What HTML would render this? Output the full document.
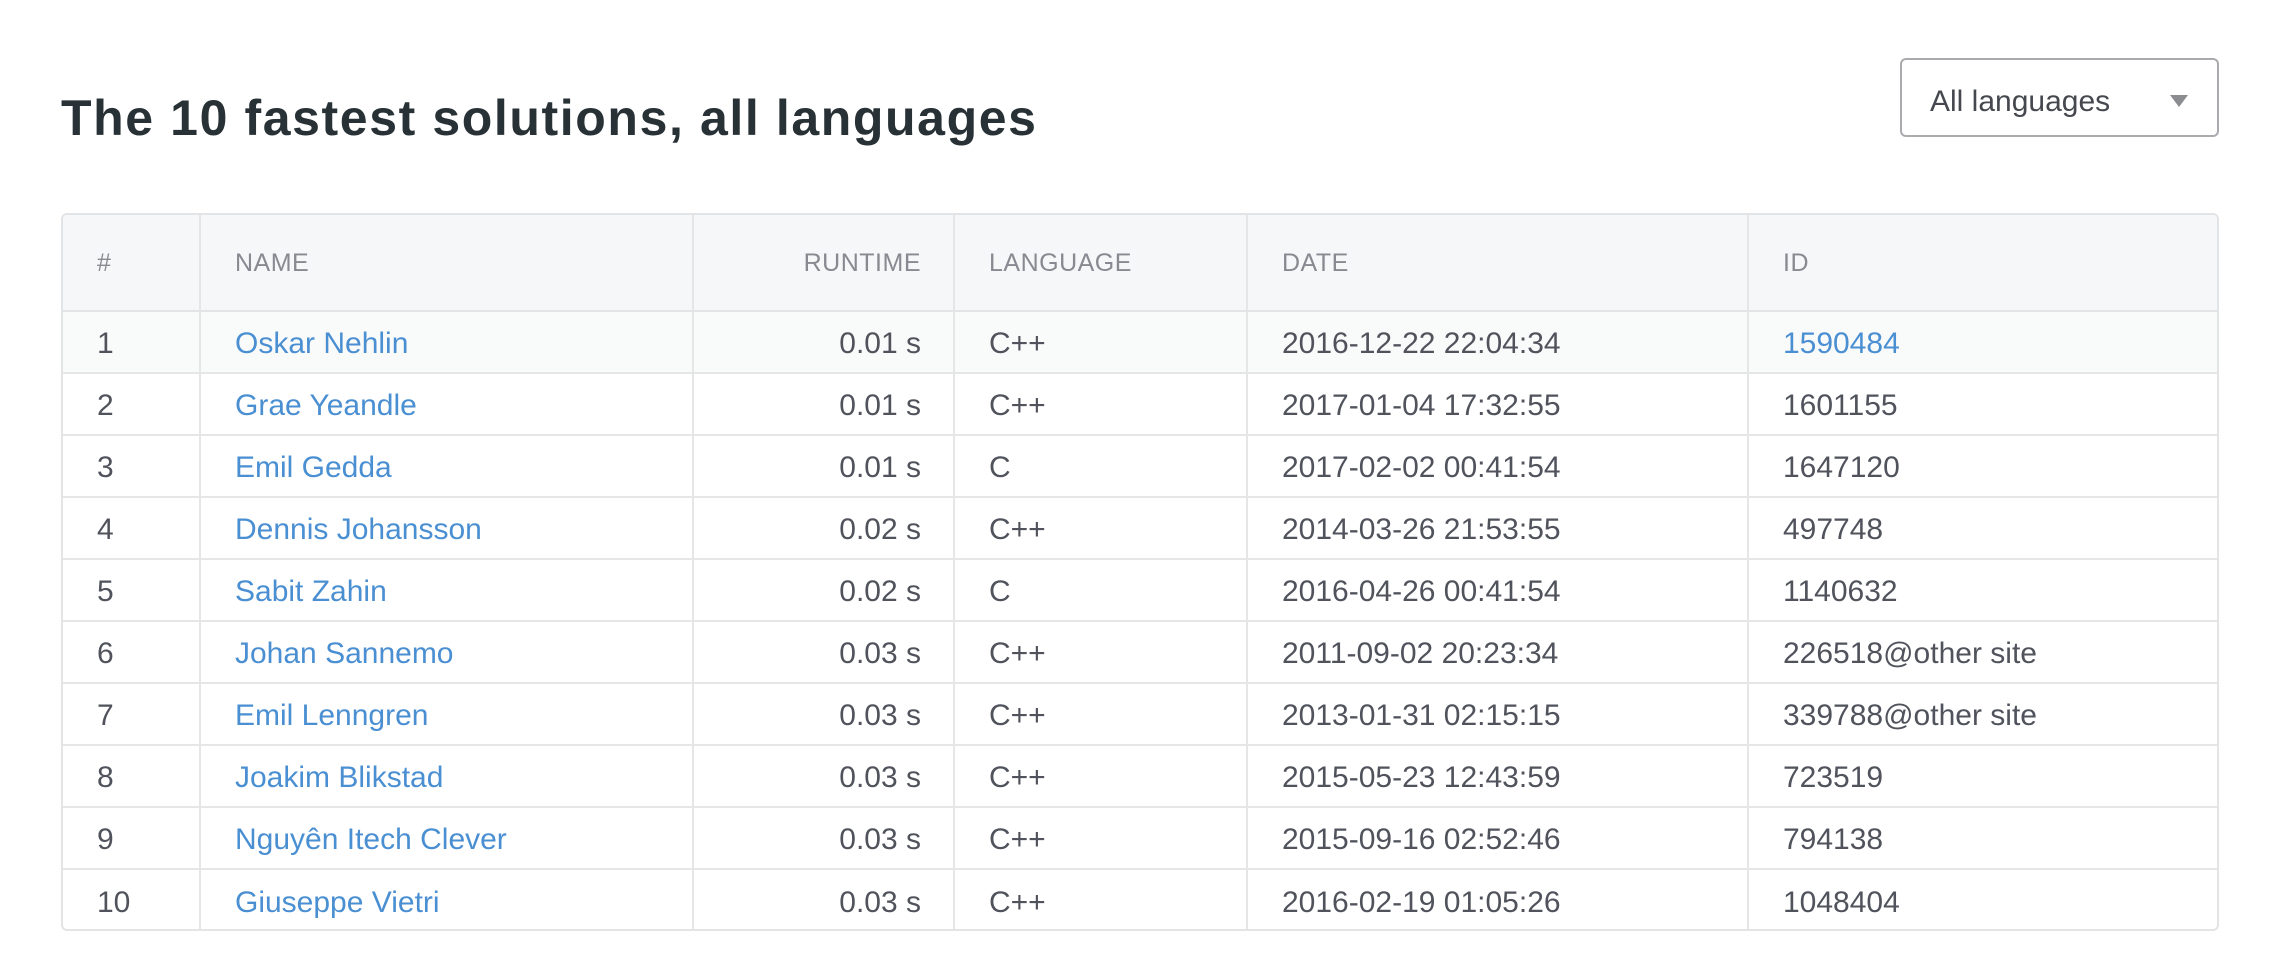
<!DOCTYPE html>
<html><head><meta charset="utf-8"><style>
*{box-sizing:border-box;margin:0;padding:0}
body{width:2276px;height:978px;background:#fff;font-family:"Liberation Sans",sans-serif;position:relative;overflow:hidden}
h1{position:absolute;left:61px;top:88px;font-size:50px;font-weight:bold;color:#283236;line-height:60px;letter-spacing:1.6px}
.sel{position:absolute;left:1900px;top:58px;width:319px;height:79px;border:2px solid #a9abae;border-radius:6px;color:#45484e;font-size:30px;line-height:83px;padding-left:28px}
.sel i{position:absolute;left:268px;top:35px;width:0;height:0;border-left:9px solid transparent;border-right:9px solid transparent;border-top:12px solid #8a8c90}
.tbl{position:absolute;left:61px;top:213px;width:2158px;height:718px;border:2px solid #e3e4e6;border-radius:6px;overflow:hidden}
table{border-collapse:collapse;width:100%;table-layout:fixed}
td,th{border-left:2px solid #e6e6e6;border-top:2px solid #e6e6e6;padding:0 34px;font-size:30px;color:#50535c;text-align:left;white-space:nowrap;font-weight:normal}
td:first-child,th:first-child{border-left:none}
tr:first-child th{border-top:none}
th{height:96px;background:#f6f7f9;color:#878a91;font-size:25px;letter-spacing:0.5px;padding-top:2px}
thead tr th{border-bottom:2px solid #e3e4e6}
td{height:62px;padding-top:4px}
tbody tr:first-child td{border-top:none;background:#f9fafa}
.r{text-align:right;padding-right:32px}
a{color:#4a8fd2;text-decoration:none}
</style></head><body>
<h1>The 10 fastest solutions, all languages</h1>
<div class="sel">All languages<i></i></div>
<div class="tbl"><table>
<colgroup><col style="width:137px"><col style="width:493px"><col style="width:261px"><col style="width:293px"><col style="width:501px"><col></colgroup>
<thead><tr><th>#</th><th>NAME</th><th class="r">RUNTIME</th><th>LANGUAGE</th><th>DATE</th><th>ID</th></tr></thead>
<tbody>
<tr><td>1</td><td><a>Oskar Nehlin</a></td><td class="r">0.01 s</td><td>C++</td><td>2016-12-22 22:04:34</td><td><a>1590484</a></td></tr>
<tr><td>2</td><td><a>Grae Yeandle</a></td><td class="r">0.01 s</td><td>C++</td><td>2017-01-04 17:32:55</td><td>1601155</td></tr>
<tr><td>3</td><td><a>Emil Gedda</a></td><td class="r">0.01 s</td><td>C</td><td>2017-02-02 00:41:54</td><td>1647120</td></tr>
<tr><td>4</td><td><a>Dennis Johansson</a></td><td class="r">0.02 s</td><td>C++</td><td>2014-03-26 21:53:55</td><td>497748</td></tr>
<tr><td>5</td><td><a>Sabit Zahin</a></td><td class="r">0.02 s</td><td>C</td><td>2016-04-26 00:41:54</td><td>1140632</td></tr>
<tr><td>6</td><td><a>Johan Sannemo</a></td><td class="r">0.03 s</td><td>C++</td><td>2011-09-02 20:23:34</td><td>226518@other site</td></tr>
<tr><td>7</td><td><a>Emil Lenngren</a></td><td class="r">0.03 s</td><td>C++</td><td>2013-01-31 02:15:15</td><td>339788@other site</td></tr>
<tr><td>8</td><td><a>Joakim Blikstad</a></td><td class="r">0.03 s</td><td>C++</td><td>2015-05-23 12:43:59</td><td>723519</td></tr>
<tr><td>9</td><td><a>Nguyên Itech Clever</a></td><td class="r">0.03 s</td><td>C++</td><td>2015-09-16 02:52:46</td><td>794138</td></tr>
<tr><td>10</td><td><a>Giuseppe Vietri</a></td><td class="r">0.03 s</td><td>C++</td><td>2016-02-19 01:05:26</td><td>1048404</td></tr>
</tbody></table></div>
</body></html>
